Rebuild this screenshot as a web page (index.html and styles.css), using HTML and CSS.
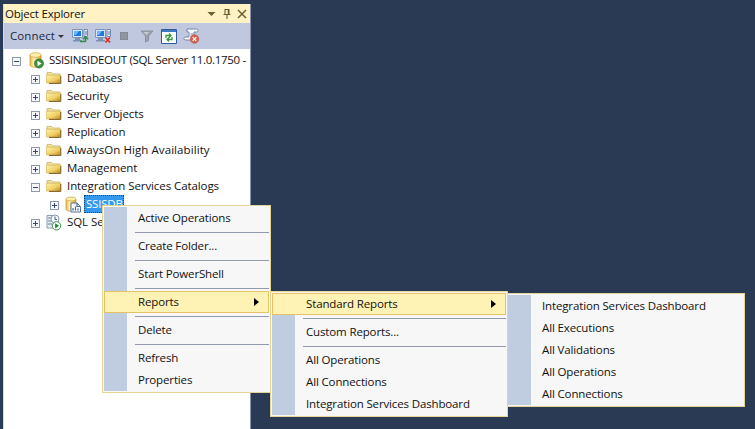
FILE: index.html
```
<!DOCTYPE html>
<html lang="en">
<head>
<meta charset="utf-8">
<title>Object Explorer</title>
<link rel="stylesheet" href="styles.css">
</head>
<body>
<svg width="0" height="0" class="defs" aria-hidden="true">
  <defs>
    <linearGradient id="gold" x1="0" y1="0" x2="1" y2="1"><stop offset="0" stop-color="#fff3b0"/><stop offset=".6" stop-color="#efcd60"/><stop offset="1" stop-color="#b5851c"/></linearGradient>
    <linearGradient id="cyl" x1="0" y1="0" x2="1" y2="0"><stop offset="0" stop-color="#e2b94a"/><stop offset=".35" stop-color="#fff0b5"/><stop offset="1" stop-color="#d59f28"/></linearGradient>
    <symbol id="folder" viewBox="0 0 16 14">
      <path d="M1 4V1.500h4.500L7 3h7v2z" fill="#f6e6a0" stroke="#c8b068" stroke-width=".8"/>
      <path d="M.500 4.200h14V12H.500z" fill="url(#gold)" stroke="#d9b860" stroke-width=".7"/>
      <path d="M3 12.400h11.800V5" fill="none" stroke="#6d4c0c" stroke-width=".9"/>
    </symbol>
    <symbol id="computer" viewBox="0 0 18 16">
      <path d="M.500 1.500h10v8H.500z" fill="#d9e5f5" stroke="#7d96c0"/>
      <path d="M2 3h7v5H2z" fill="#1f78e0"/>
      <path d="M2 3h5L4 7H2z" fill="#62b8ff"/>
      <path d="M3 10h5v2h2v1.500H1V12h2z" fill="#7c90b5"/>
      <path d="M12 1.500h3.500v7H12z" fill="#edf2fc" stroke="#7188b3"/>
      <path d="M13 4h2M13 6h2" stroke="#5873a3"/>
    </symbol>
  </defs>
</svg>
<main class="desktop">
  <section class="panel">
    <header class="title">
      <span class="title-text">Object Explorer</span>
      <svg class="title-icons" width="42" height="12" viewBox="0 0 42 12"><path d="M.500 4h8L4.500 8z" fill="#6b5d34"/><path d="M18 1.500h4v5h-4zM16.500 6.500h7M20 7v4M21.300 2v4" fill="none" stroke="#6b5d34" stroke-width="1.100"/><path d="M31 2l8 8M39 2l-8 8" stroke="#6b5d34" stroke-width="1.500"/></svg>
    </header>
    <div class="toolbar">
      <span class="connect">Connect</span><i class="caret"></i>
      <svg class="tool t1" width="18" height="16"><use href="#computer"/><path d="M8 13.500h5.500V9M11 11.300l2.500-2.800 2.600 2.800" fill="none" stroke="#28913d" stroke-width="1.500"/></svg>
      <svg class="tool t2" width="18" height="16"><use href="#computer"/><path d="M10.500 9.500l4.500 5m0-5l-4.500 5" stroke="#d82f26" stroke-width="1.800"/></svg>
      <i class="stop"></i>
      <svg class="tool t3" width="14" height="13" viewBox="0 0 14 13"><path d="M1 1h12L8.500 6v4.500L5.500 12V6z" fill="#9ca2ae" stroke="#8a919e"/><path d="M3 2h6L6.700 5z" fill="#c6cad3"/></svg>
      <svg class="tool t4" width="16" height="15" viewBox="0 0 16 15"><path d="M.500.500h15v14H.500z" fill="#fff" stroke="#315b99"/><path d="M1 1h14v2H1z" fill="#3c78c4"/><path d="M5 9V6.500h4.500M8 4.500l2 2-2 2M11 8v2.500H6.500M8 8.500l-2 2 2 2" fill="none" stroke="#38993d" stroke-width="1.300"/></svg>
      <svg class="tool t5" width="17" height="16" viewBox="0 0 17 16"><path d="M4.500 1h9c2 0 2 3 0 3H11v8H3c-3 0-3-3 0-3h3" fill="#f9fbff" stroke="#7285a6"/><path d="M5 1c-2 0-2 3 0 3h1v5M7.500 6H10M7.500 8H10" fill="none" stroke="#7285a6"/><circle cx="11.500" cy="11" r="4.300" fill="#d9604e" stroke="#b65445" stroke-width=".6"/><path d="M9.700 9.200l3.600 3.600m0-3.600l-3.600 3.600" stroke="#fff" stroke-width="1.200"/></svg>
    </div>
    <div class="tree">
      <div class="row root"><i class="expander minus"></i><svg class="icon server" width="16" height="17" viewBox="0 0 16 17"><path d="M1 3v10c0 3 11 3 11 0V3" fill="url(#cyl)" stroke="#c89630" stroke-width=".7"/><ellipse cx="6.500" cy="3" rx="5.500" ry="2.300" fill="#fff0ae" stroke="#cda03a" stroke-width=".7"/><circle cx="10" cy="11.500" r="4.500" fill="#3b913e" stroke="#26712e" stroke-width=".7"/><path d="M8.500 8.700l4.200 2.800-4.200 2.800z" fill="#fff"/></svg><span class="label">SSISINSIDEOUT (SQL Server 11.0.1750 -</span></div>
      <div class="row"><i class="expander"></i><svg class="icon" width="16" height="14"><use href="#folder"/></svg><span class="label">Databases</span></div>
      <div class="row"><i class="expander"></i><svg class="icon" width="16" height="14"><use href="#folder"/></svg><span class="label">Security</span></div>
      <div class="row"><i class="expander"></i><svg class="icon" width="16" height="14"><use href="#folder"/></svg><span class="label">Server Objects</span></div>
      <div class="row"><i class="expander"></i><svg class="icon" width="16" height="14"><use href="#folder"/></svg><span class="label">Replication</span></div>
      <div class="row"><i class="expander"></i><svg class="icon" width="16" height="14"><use href="#folder"/></svg><span class="label always">AlwaysOn High Availability</span></div>
      <div class="row"><i class="expander"></i><svg class="icon" width="16" height="14"><use href="#folder"/></svg><span class="label">Management</span></div>
      <div class="row"><i class="expander minus"></i><svg class="icon" width="16" height="14"><use href="#folder"/></svg><span class="label">Integration Services Catalogs</span></div>
      <div class="row leaf"><i class="expander"></i><svg class="icon" width="17" height="17" viewBox="0 0 17 17"><path d="M1 3v10c0 3 10 3 10 0V3" fill="url(#cyl)" stroke="#c89630" stroke-width=".7"/><ellipse cx="6" cy="3" rx="5" ry="2" fill="#fff0ae" stroke="#cda03a" stroke-width=".7"/><path d="M6 7h6l3.500 3.500V16H6z" fill="#f7faff" stroke="#566f9c"/><path d="M12 7v3.500h3M8 14.500V12m2.500 2.500v-4m2.500 4v-2" fill="none" stroke="#406ca8" stroke-width="1.200"/></svg><span class="label selected">SSISDB</span></div>
      <div class="row agent"><i class="expander"></i><svg class="icon" width="16" height="17" viewBox="0 0 16 17"><path d="M1 1.500h7V14H1z" fill="#e9eef4" stroke="#899bb2"/><path d="M2 4h4M2 7h5M2 10h4" stroke="#697f9d"/><circle cx="9" cy="5" r="4" fill="#f5f9ff" stroke="#8b9aac"/><path d="M9 2.500v3h2" fill="none" stroke="#496482"/><circle cx="10.500" cy="11.800" r="4.200" fill="#fff" stroke="#3c9344"/><path d="M9.100 9.200l4 2.600-4 2.600z" fill="#178a2b"/></svg><span class="label">SQL Se</span></div>
    </div>
  </section>

  <nav class="menu menu-third">
    <div class="item">Integration Services Dashboard</div>
    <div class="item">All Executions</div>
    <div class="item">All Validations</div>
    <div class="item">All Operations</div>
    <div class="item">All Connections</div>
  </nav>
  <nav class="menu menu-first">
    <div class="item">Active Operations</div><hr>
    <div class="item">Create Folder...</div><hr>
    <div class="item">Start PowerShell</div><hr>
    <div class="item open">Reports</div><hr>
    <div class="item">Delete</div><hr>
    <div class="item">Refresh</div>
    <div class="item">Properties</div>
  </nav>
  <nav class="menu menu-second">
    <div class="item open">Standard Reports</div><hr>
    <div class="item">Custom Reports...</div><hr>
    <div class="item">All Operations</div>
    <div class="item">All Connections</div>
    <div class="item">Integration Services Dashboard</div>
  </nav>
</main>
</body>
</html>
```
FILE: styles.css
```
* { box-sizing: border-box; }
body { margin: 0; font: 11.5px/18px "Open Sans", "Noto Sans", sans-serif; color: #111; }
.defs { position: absolute; }
.desktop { position: relative; width: 755px; height: 429px; overflow: hidden; background: #2b3a54; padding: 4px 0 0 3px; }
.panel { width: 248px; height: 425px; background: #fff; border-right: 1px solid #8995aa; border-left: 1px solid #d5dbe5; overflow: hidden; }
.title { height: 19px; display: flex; align-items: center; justify-content: space-between; padding: 0 1px 0 1px; background: #fff3c6; border-radius: 2px 2px 0 0; }
.title-text { letter-spacing: -.2px; }
.title-icons { display: block; }
.toolbar { height: 26px; background: #bfc8de; display: flex; align-items: center; padding-left: 6px; color: #1b293e; }
.connect { letter-spacing: .1px; width: 45px; }
.caret { border: 3px solid transparent; border-top-color: #333; border-bottom: 0; margin-left: 3px; }
.tool { display: block; flex: none; }
.t1 { margin-left: 8px; }
.t2 { margin-left: 5px; }
.stop { width: 8px; height: 8px; margin-left: 7px; background: #9096a1; border: 1px solid #838995; }
.t3 { margin-left: 12px; }
.t4 { margin-left: 7px; }
.t5 { margin-left: 6px; }
.tree { padding-top: 2px; }
.row { height: 18px; display: flex; align-items: center; padding-left: 27px; white-space: nowrap; }
.root { padding-left: 8px; }
.leaf { padding-left: 46px; }
.expander { width: 9px; height: 9px; flex: none; border: 1px solid #8d98ab; position: relative; top: 1px; background: linear-gradient(#34456b, #34456b) center / 5px 1px no-repeat, linear-gradient(#34456b, #34456b) center / 1px 5px no-repeat, #f6f8fb; }
.minus { background: linear-gradient(#34456b, #34456b) center / 5px 1px no-repeat, #f6f8fb; }
.icon { flex: none; margin-left: 6px; }
.server { margin-left: 8px; }
.label { margin-left: 5px; letter-spacing: -.08px; }
.always { letter-spacing: .08px; }
.root .label { margin-left: 4px; letter-spacing: -.32px; }
.leaf .selected { width: 40px; height: 18px; margin-left: 2px; padding: 0 2px; letter-spacing: -.2px; color: #fff; background: #3399ef; outline: 1px dotted #274263; outline-offset: -1px; }
.menu { position: absolute; padding: 1px; border: 1px solid #e5d592; background: linear-gradient(90deg, #c0ccdf 23px, #f7f7f7 23px) content-box, #f7f7f7; }
.menu-first { left: 102px; top: 205px; width: 169px; height: 188px; }
.menu-second { left: 270px; top: 291px; width: 238px; height: 126px; }
.menu-third { left: 506px; top: 293px; width: 239px; height: 114px; }
.item { height: 22px; display: flex; align-items: center; padding: 0 0 0 34px; letter-spacing: -.14px; white-space: nowrap; }
.open { justify-content: space-between; padding: 0 9px 0 33px; border: 1px solid #e5c365; background: #fff2b5; }
.open::after { content: ""; border: 4px solid transparent; border-left: 5px solid #000; border-right: 0; }
hr { height: 1px; margin: 3px 0 2px 31px; border: 0; background: #9299ad; }
```
